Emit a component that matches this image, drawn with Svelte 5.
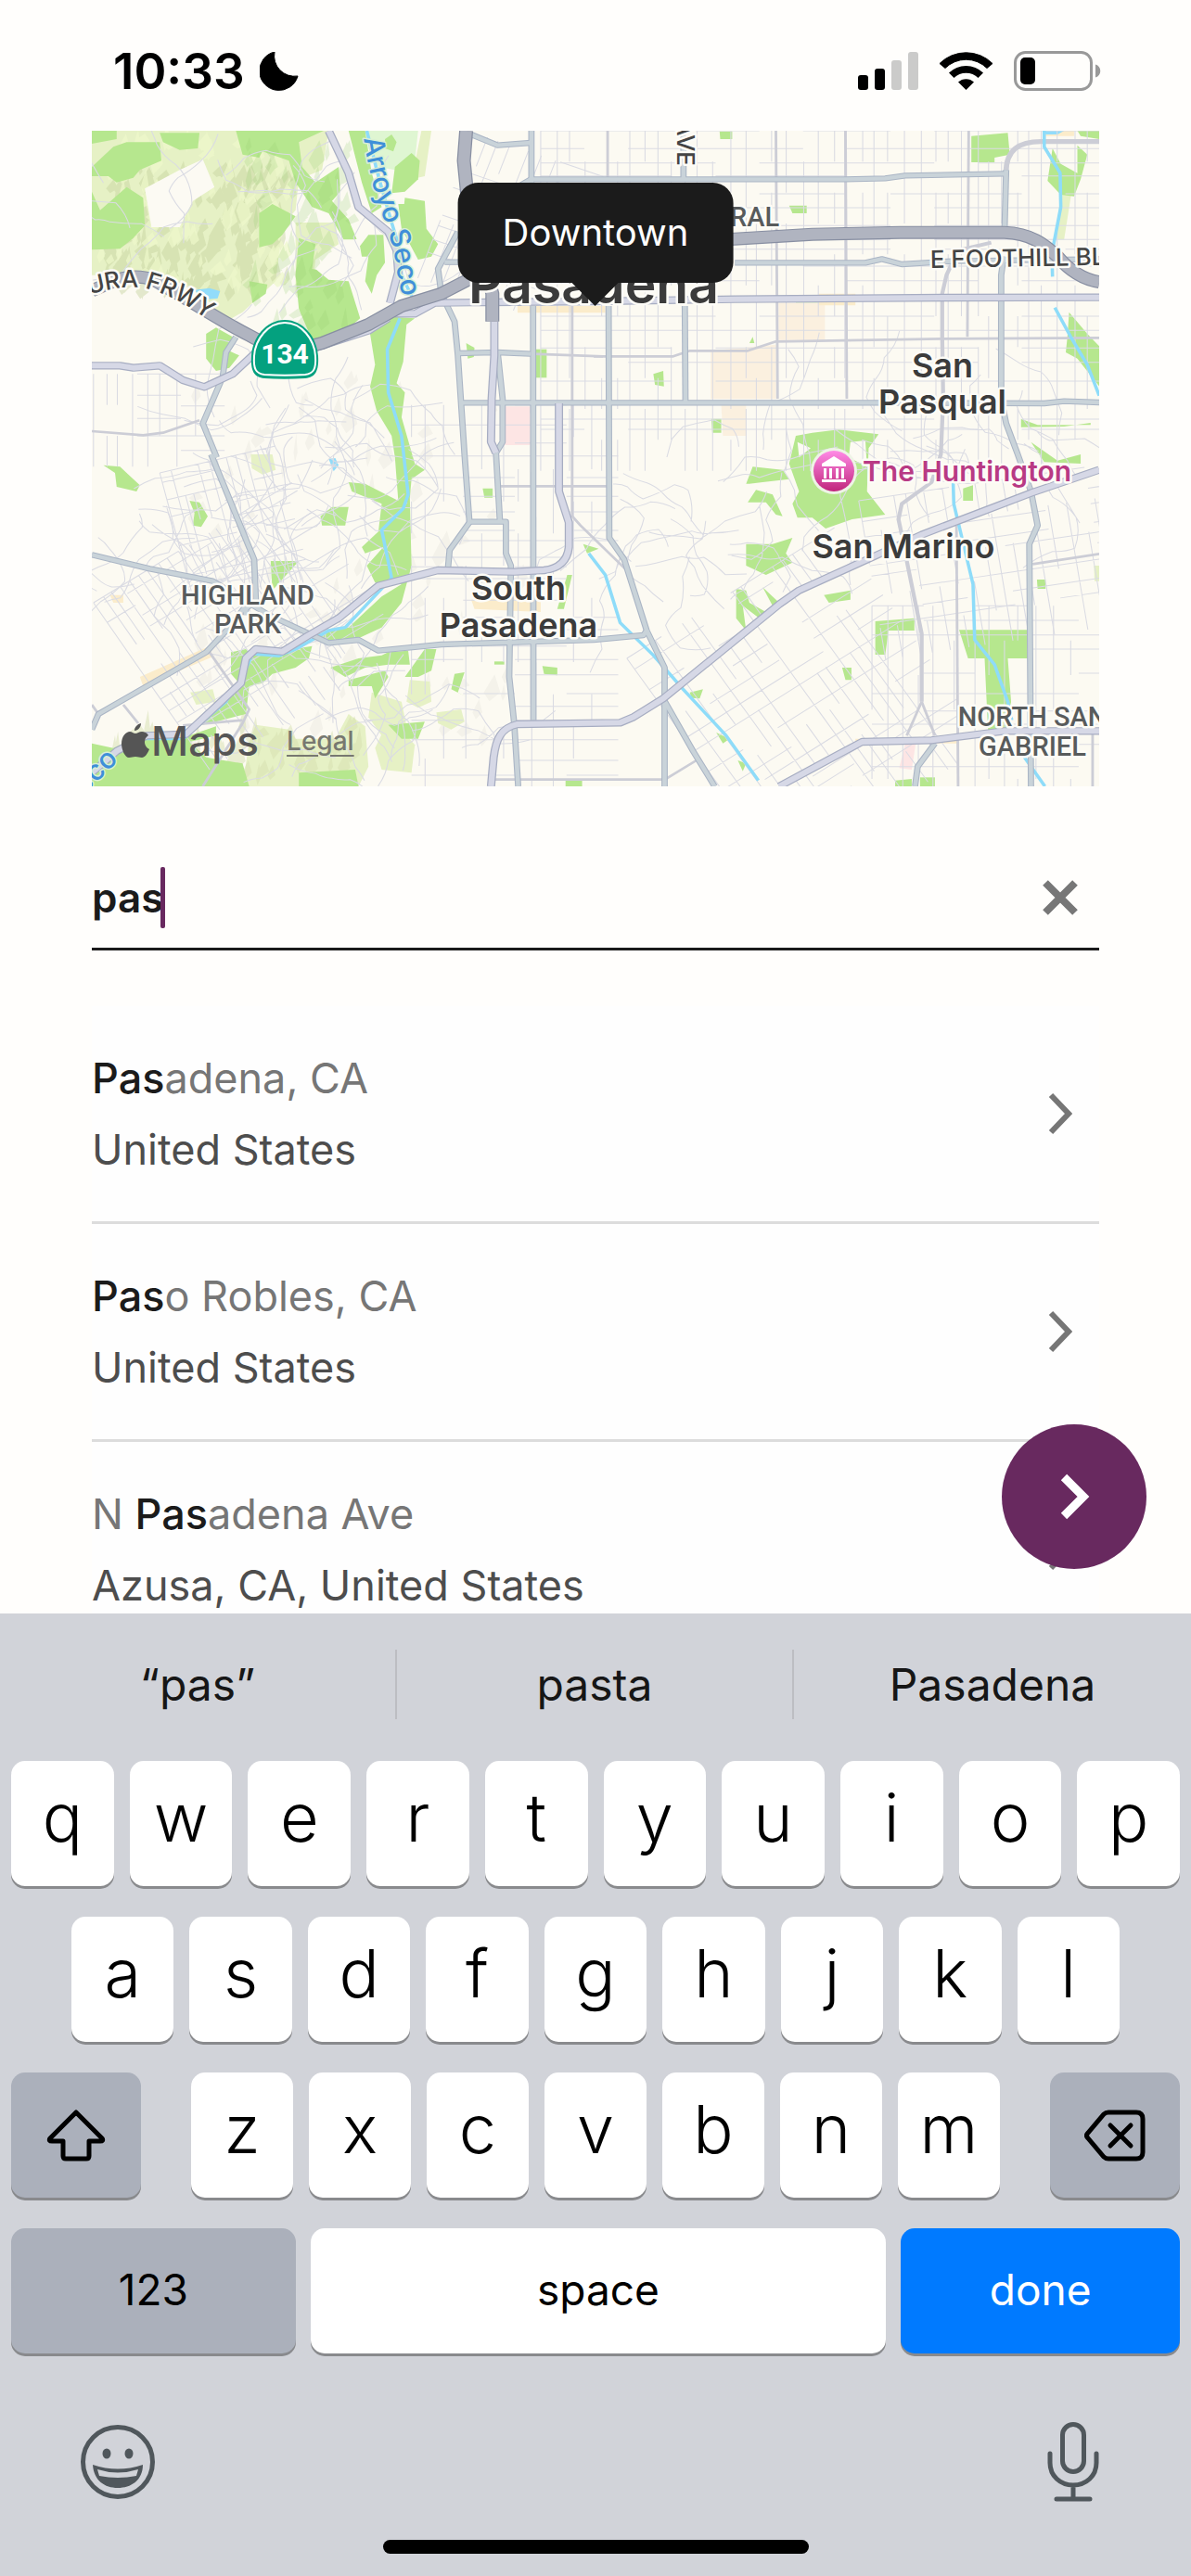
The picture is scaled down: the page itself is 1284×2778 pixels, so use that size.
<script>
  let query = $state('pas');

  const results = [
    { before: '', match: 'Pas', after: 'adena, CA', detail: 'United States' },
    { before: '', match: 'Pas', after: 'o Robles, CA', detail: 'United States' },
    { before: 'N ', match: 'Pas', after: 'adena Ave', detail: 'Azusa, CA, United States' }
  ];

  const suggestions = ['“pas”', 'pasta', 'Pasadena'];
  const topRow = [...'qwertyuiop'];
  const homeRow = [...'asdfghjkl'];
  const bottomRow = [...'zxcvbnm'];

  // Small seeded generator, so the street texture is the same on every load.
  function makeRandom(seed) {
    let s = seed;
    return () => {
      s = (s * 16807) % 2147483647;
      return s / 2147483647;
    };
  }

  function streetGrid(seed, w, h, dx, dy, keep) {
    const rnd = makeRandom(seed);
    let d = '';
    for (let x = 0; x < w; x += dx * (0.7 + rnd() * 0.6)) {
      for (let y = 0; y < h; y += dy * 2) {
        if (rnd() < keep) d += `M${Math.round(x)},${y}v${dy * 2}`;
      }
    }
    for (let y = 0; y < h; y += dy * (0.6 + rnd() * 0.8)) {
      for (let x = 0; x < w; x += dx * 3) {
        if (rnd() < keep) d += `M${x},${Math.round(y)}h${dx * 3}`;
      }
    }
    return d;
  }

  function lanes(seed, w, h, count) {
    const rnd = makeRandom(seed);
    let d = '';
    for (let i = 0; i < count; i++) {
      let x = rnd() * w;
      let y = rnd() * h;
      let a = rnd() * 6.28;
      d += `M${Math.round(x)},${Math.round(y)}`;
      for (let j = 0; j < 5; j++) {
        a += (rnd() - 0.5) * 1.8;
        const r = 22 + rnd() * 32;
        const cx = x + Math.cos(a) * r;
        const cy = y + Math.sin(a) * r;
        a += (rnd() - 0.5) * 1.2;
        x = cx + Math.cos(a) * r;
        y = cy + Math.sin(a) * r;
        d += `Q${Math.round(cx)},${Math.round(cy)} ${Math.round(x)},${Math.round(y)}`;
      }
    }
    return d;
  }

  function facets(seed, x0, y0, w, h, count) {
    const rnd = makeRandom(seed);
    let d = '';
    for (let i = 0; i < count; i++) {
      const x = Math.round(x0 + rnd() * w);
      const y = Math.round(y0 + rnd() * h);
      const a = Math.round(8 + rnd() * 26);
      const b = Math.round(20 + rnd() * 44);
      d += `M${x},${y}l${a},${-b}l${Math.round(a / 2)},${b}l${-a},${Math.round(b / 2)}z`;
    }
    return d;
  }

  const grids = [
    { d: streetGrid(11, 1680, 1010, 44, 50, 0.78), t: 'translate(1380 33)' },
    { d: streetGrid(5, 560, 1240, 52, 52, 0.5), t: 'translate(990 920)' },
    { d: streetGrid(23, 620, 560, 34, 46, 0.72), t: 'translate(30 1560) rotate(-33)' },
    { d: streetGrid(31, 340, 420, 30, 44, 0.66), t: 'translate(230 1140) rotate(-14)' },
    { d: streetGrid(3, 330, 280, 44, 50, 0.6), t: 'translate(30 820)' },
    { d: streetGrid(47, 640, 780, 42, 60, 0.66), t: 'translate(1640 1740) rotate(-34)' },
    { d: streetGrid(8, 640, 620, 52, 56, 0.62), t: 'translate(2380 1570)' },
    { d: streetGrid(17, 720, 420, 46, 52, 0.55), t: 'translate(2340 1230) rotate(-9)' },
    { d: streetGrid(29, 330, 420, 46, 50, 0.55), t: 'translate(1180 40) rotate(20)' }
  ];

  const curls = [
    { d: lanes(7, 700, 420, 34), t: 'translate(250 860)' },
    { d: lanes(19, 520, 420, 22), t: 'translate(440 1160)' },
    { d: lanes(37, 560, 420, 24), t: 'translate(620 1720)' },
    { d: lanes(41, 460, 420, 20), t: 'translate(1620 1060)' },
    { d: lanes(53, 300, 460, 13), t: 'translate(620 90)' },
    { d: lanes(61, 900, 180, 22), t: 'translate(2120 990)' },
    { d: lanes(71, 360, 360, 6), t: 'translate(60 80)' },
    { d: lanes(83, 360, 460, 12), t: 'translate(40 1100)' }
  ];

  const hillShade = facets(13, 60, 160, 540, 400, 170);
  const hillLight = facets(97, 40, 60, 560, 500, 90);
  const parkShade = facets(59, 480, 60, 320, 620, 60);
  const lowShade = facets(67, 60, 1960, 760, 180, 60);
  const paleShade = facets(73, 300, 820, 1000, 1200, 90);

  const paleGreen = [
    'M25,33H740L720,160L650,190L640,290L600,340L580,520L480,620L430,650L340,540L200,500L25,500Z',
    'M640,330L760,330L770,400L700,450L690,540L640,560Z',
    'M505,1080H570L580,1130L540,1145L508,1125Z',
    'M520,1955L620,1970L640,2000H760L800,1920L850,1960L860,2090L830,2154H480L500,2010Z',
    'M870,1850L960,1880L975,1960L940,2000L900,1990L860,1930Z',
    'M985,1810L1045,1815L1050,1880L1010,1900L975,1880Z',
    'M1065,1915L1140,1905L1150,1945L1110,1970L1070,1950Z',
    'M322,1850L390,1840L400,1880L340,1890Z',
    'M900,1985L960,1970L1000,2020L990,2110L900,2100L880,2030Z',
    'M2960,180H2990L2960,385H2930Z',
    'M3050,1440H3066V1490H3052Z',
    'M1020,33H1050L1030,180L990,190Z'
  ];

  const greens = [
    'M460,33H725L650,70L660,150L700,200L770,150L775,230L750,260L800,320L825,385H785L740,300L690,280L640,200L620,130L540,100L530,120L480,110Z',
    'M90,85L130,70L230,70L235,130L170,160L150,185L100,200L75,180L25,180V150Z',
    'M25,230L50,290L130,215L180,250L185,340L150,380L110,415L25,418Z',
    'M25,33H100V60L25,75Z',
    'M230,40H350L345,90L290,95L240,70Z',
    'M530,300L570,270L640,310L600,370L570,400L530,410Z',
    'M500,520L555,530L550,560L510,590Z',
    'M650,380L700,400L690,480L740,490L800,520L835,640L780,690L690,710L650,610L640,500Z',
    'M860,370L905,370L910,460L885,500L870,560L850,520L860,440L810,440Z',
    'M800,33H850L870,170L900,280L870,300L840,200Z',
    'M940,150L990,105L1015,130L1010,190L970,230L930,235Z',
    'M910,60L930,45L945,70L935,100L910,90Z',
    'M970,250L1030,260L1035,350L1070,400L1050,440L1010,450L960,350Z',
    'M950,270H990V340L960,350Z',
    'M370,690L400,670L450,700L430,740L470,760L440,800L400,810L370,770Z',
    'M930,635L1000,640L975,660L965,780L945,850L970,880L960,960L1000,1110L1030,1130L990,1160L985,1220L990,1440L960,1560L900,1640L820,1680L720,1680L690,1665L800,1640L840,1600L900,1540L960,1500L880,1495L855,1440L905,1380L850,1400L840,1380L890,1330L900,1240L810,1200L800,1170L850,1175L950,1230L940,1090L930,1020L885,940L865,860L880,790L865,690Z',
    'M445,1720L490,1710L510,1730L690,1700L680,1740L640,1770L570,1790L540,1820L500,1830L490,1920L400,1945L340,1960L430,1880L470,1820L445,1790Z',
    'M25,2015L90,2030L150,2000H290L400,1960L400,1990L320,2010L370,2060L480,2080L500,2154H25Z',
    'M745,1770L830,1740L900,1730L920,1720L980,1715L985,1760L920,1760L850,1770L790,1800Z',
    'M800,1810L910,1780L920,1800L880,1870L870,1830L800,1830Z',
    'M1030,1710H1065L1050,1780L1010,1800H970Z',
    'M1120,1790L1150,1785L1130,1850L1165,1870L1110,1840Z',
    'M715,1280L750,1250L800,1250L790,1310L720,1310Z',
    'M60,1115L110,1120L170,1180L160,1200L100,1185L95,1140Z',
    'M320,1230L350,1235L375,1280L355,1315L330,1310L335,1270Z',
    'M565,1425H650L570,1520Z',
    'M650,2110L820,2100L830,2154H650Z',
    'M920,1955L1030,1945L1010,2000H960Z',
    'M1365,740H1398V832H1365Z',
    'M1155,720L1180,735L1178,765L1160,770Z',
    'M1920,35H1958V60H1922Z',
    'M2680,50L2790,40L2796,110L2750,120V135H2680Z',
    'M2925,90L2950,140L3000,170V80L3030,110L3010,190L2990,245L2950,240L2910,195Z',
    'M3000,33H3066V60L3010,50Z',
    'M2130,275H2183V300H2140Z',
    'M2975,620L3030,690L3066,730V860L3000,770L2965,750L2970,700Z',
    'M1940,930H1978V962H1940Z',
    'M1895,965H1925V1010H1898Z',
    'M2155,685H2192V700H2155Z',
    'M2150,590H2225V597H2150Z',
    'M1925,795H1940V875H1925Z',
    'M1720,820L1750,810L1752,860L1725,855Z',
    'M2010,720L2020,700L2025,720Z',
    'M2150,1020L2200,1010L2280,1000L2400,1015L2370,1060L2365,1200L2420,1275L2320,1290L2240,1320L2200,1285H2155L2140,1240L2160,1200L2130,1110Z',
    'M2000,1175L2020,1120L2110,1130L2130,1160L2050,1170L2010,1175Z',
    'M2030,1195L2080,1210L2110,1280L2090,1275L2060,1235L2005,1235Z',
    'M2000,1370L2080,1370L2140,1350L2120,1400L2140,1430L2060,1470L2000,1440Z',
    'M1970,1515L2000,1520L2010,1560L2060,1590L2040,1610L1990,1570L2000,1650L1970,1610Z',
    'M2050,1510L2100,1560L2080,1570Z',
    'M2235,1535L2315,1520V1550L2250,1560Z',
    'M2390,1620L2508,1610V1650H2430L2420,1728H2390Z',
    'M2643,1648H2850V1740H2790L2800,1880L2780,1990L2730,1970L2720,1740H2670Z',
    'M2290,1770H2318V1810H2300Z',
    'M2830,965L2880,985H3040V978L2960,990L2830,992Z',
    'M2860,1040L2940,1100L3010,1080V1110L2900,1105Z',
    'M2655,1190L2685,1180V1230H2655Z',
    'M2878,1485H2904V1515H2880Z',
    'M2450,2135L2500,2130V2154H2450Z',
    'M2525,2125H2570V2154H2525Z',
    'M1830,1850L1870,1840L1860,1870L1835,1868Z',
    'M1910,1980L1950,2000L1930,2015Z',
    'M1975,2070L2000,2080L1990,2105Z',
    'M1385,1765L1430,1770V1795L1390,1790Z',
    'M1240,1750H1270V1760H1240Z',
    'M1205,1190H1235V1220H1210Z',
    'M1508,1370L1555,1385L1520,1400Z',
    'M1455,2135H1505V2154H1455Z',
    'M1460,1470H1475L1450,1580H1430Z'
  ];

  const tints = [
    { fill: '#fbf0df', d: 'M2098,590H2238V710H2098ZM1893,745L2090,725V900H1893ZM1925,920H2000V1020H1930Z' },
    { fill: '#fbeccb', d: 'M1310,600H1575V622H1310ZM2220,560H2330V598H2220ZM170,1800L380,1700L390,1735L180,1830ZM1170,1550L1380,1540V1590L1180,1580ZM2330,2000H2640V2015H2330ZM80,1535H120V1560H90ZM2900,33H2990V50H2900Z' },
    { fill: '#fde5e4', d: 'M1272,925H1348V1050H1272ZM2480,2018L2512,2015L2500,2100L2462,2095Z' },
    { fill: '#fcfaf3', d: 'M185,220L290,160L360,125L395,215L330,260L290,345L205,345Z' },
    { fill: '#fcfaf3', d: 'M700,480L740,430L830,380L840,440L800,520L740,515Z' },
    { fill: '#fcfaf3', d: 'M2155,1040L2195,1060L2160,1090ZM2315,1040L2360,1035L2365,1120L2310,1090Z' },
    { fill: '#92dcfa', d: 'M335,548L380,542L412,552L405,575L360,580ZM740,1095L760,1092L770,1115L755,1135ZM2900,33H2960L2940,45H2905Z' }
  ];

  const connectors = [
    'M1582,33V190', 'M2090,33L2094,700L2095,900', 'M2300,33L2304,900', 'M2672,33L2668,700',
    'M1540,763H1780L1830,745H2005L2090,715L2590,706L3066,703',
    'M1475,600V1280L1500,1310L1635,1450',
    'M25,1005L180,1018L240,1010L350,970',
    'M380,1720L500,1905L480,1950L360,2154', 'M120,1890L165,1950', 'M300,1957L480,1940',
    'M1260,1183H1585', 'M1240,2132H1755L1850,2070',
    'M2635,1310L2640,2154', 'M2865,1435L3066,1402', 'M1357,755L1568,763', 'M3046,1980V2154',
    'M2530,1880L2485,1990', 'M2530,1880L2570,1990', 'M25,1890L45,1920'
  ];

  const avenues = [
    'M2485,1425L2530,1660V1880',
    'M2740,395L2640,420L2605,500L2592,560L2592,700L2595,900L2588,1080L2560,1170L2470,1240L2460,1290L2470,1340'
  ];

  const arterials = [
    'M1170,45L1250,80L1350,72', 'M1352,33V200',
    'M1310,215L1350,190H2300L2420,187L2480,178L2780,172',
    'M1130,360L1070,480L1080,560L1120,650L1130,760L1150,1080L1165,1300L1105,1390L1100,1450',
    'M1090,458H1150', 'M1130,753L1250,750L1350,755',
    'M1140,913H2380L2900,915L2960,908L3066,912',
    'M1357,600L1358,1940',
    'M1250,750L1265,900V1040L1245,1075L1257,1298',
    'M1165,1298H1275V1400L1290,1440L1285,1800L1300,1950L1312,2154',
    'M1585,600L1587,1350L1632,1420L1700,1650L1754,1770V2154',
    'M1811,50V190', 'M1815,600L1817,910',
    'M1966,460H2360L2410,448L2470,465L2620,455L3066,448',
    'M2785,160L2780,360', 'M2778,440L2770,500V900L2785,980L2820,1080L2860,1200L2880,1310L2855,1370L2860,2154',
    'M385,1080L515,1420L520,1550L490,1580V1600',
    'M25,1405L200,1450L390,1490L560,1600L670,1655L740,1690L830,1680L890,1715L1080,1695L1540,1680L1690,1665L1700,1650',
    'M25,1970L45,1920L370,1720L440,1640L490,1570',
    'M460,700L430,750L420,830L360,980L402,1090',
    'M1755,1880L1840,2040L1905,2154', 'M2510,2154L2518,2090L2570,2015'
  ];

  const highways = [
    'M740,33L800,170L830,280L920,360L945,420L950,490L925,590',
    'M940,625H1000L1060,590L1220,588L1540,585L1966,578L2600,573L3066,572',
    'M25,793H110L150,800L230,793L300,840L365,862L450,820L520,750L700,735L860,680L920,640',
    'M1240,650V760L1232,900L1230,1040L1245,1075',
    'M1435,915V1200L1465,1300V1380C1460,1430 1430,1450 1390,1455L1300,1460L1070,1455L890,1505L770,1610L680,1665L600,1718L520,1710L490,1740L475,1820L310,1985L190,1990L100,2040L25,2110',
    'M3066,1130L2860,1205L2530,1340L2160,1520L2100,1565L1750,1870L1660,1930L1620,1948L1310,1953C1260,1965 1245,2000 1238,2060L1230,2154',
    'M2100,2154L2280,2050L2350,2010L2560,2005L2780,1975H3066'
  ];

  const freeways = [
    'M25,550L80,525C130,500 170,500 210,515C290,560 400,640 500,695C570,740 640,745 720,720L860,660L960,600L1080,560L1170,510L1400,420L1966,383L2200,368L2465,362H2780C2860,365 2900,400 2940,440C2980,490 3020,515 3066,522',
    'M1155,33L1148,130L1160,260L1234,560V650'
  ];

  const rivers = [
    'M855,33L890,180L930,330L950,400L960,500L1000,590',
    'M955,640L917,740L920,880L960,1020L980,1210L965,1255L900,1325L930,1480L895,1520L790,1640L740,1650L640,1710L590,1732L510,1725L480,1800L430,1880L300,2000H190',
    'M2900,33V85L2948,170L2950,280L2923,430L2925,505',
    'M2932,605L2980,700L3030,790L3066,890',
    'M2625,1170L2627,1240L2685,1500L2690,1680L2750,1760L2790,1880L2802,1940',
    'M2840,2060L2902,2154',
    'M1525,1400L1575,1470L1620,1625L1720,1730L1810,1840L1940,1990L2037,2135'
  ];
</script>

{#snippet chevron()}
  <svg class="chevron" viewBox="0 0 26 46" aria-hidden="true">
    <path d="M3 3 22 23 3 43" fill="none" stroke="currentColor" stroke-width="6" />
  </svg>
{/snippet}

<div class="screen">
  <header class="status">
    <div class="clock">
      <time>10:33</time>
      <svg width="42" height="42" viewBox="0 0 42 42" aria-label="Do not disturb" role="img">
        <path d="M16 0A22 22 0 0 0 41 26A21 21 0 1 1 16 0Z" stroke="#000" stroke-linejoin="round" />
      </svg>
    </div>
    <svg class="radios" width="264" height="43" viewBox="0 0 264 43" role="img" aria-label="Signal, Wi-Fi and battery">
      <rect x="0" y="26" width="11" height="16" rx="3" />
      <rect x="18" y="19" width="11" height="23" rx="3" />
      <rect x="36" y="10" width="11" height="32" rx="3" fill="#cbcbca" />
      <rect x="54" y="1" width="11" height="41" rx="3" fill="#cbcbca" />
      <g transform="translate(116.5 42)">
        <path d="M-28.500-28.500A40.500 40.500 0 0 1 28.500-28.500L22.500-23.500A32 32 0 0 0-22.500-23.500Z" stroke="#000" stroke-linejoin="round" />
        <path d="M-18.500-18.500A26.500 26.500 0 0 1 18.500-18.500L13-13A18.500 18.500 0 0 0-13-13Z" />
        <path d="M-8.500-8.500A12.500 12.500 0 0 1 8.500-8.500L0 0Z" />
      </g>
      <rect x="169.500" y="1.500" width="82" height="40" rx="11" fill="none" stroke="#999" stroke-width="3" />
      <rect x="175" y="7" width="16" height="29" rx="5" />
      <path d="M256 14.500c7 2 7 12 0 14z" fill="#999" />
    </svg>
  </header>

  <main>
    <section class="map" aria-label="Map of Pasadena">
      <svg class="tiles" viewBox="0 0 1086 707" role="img" aria-label="Streets around Pasadena">
        <defs>
          <linearGradient id="pin" x1="0" y1="0" x2="0" y2="1">
            <stop offset="0" stop-color="#ff8ae6" />
            <stop offset="1" stop-color="#c0267c" />
          </linearGradient>
          <path id="frwy" d="M-68,206Q-20,178 12,173Q40,166 62,171Q86,178 106,191T160,226" />
          <path id="arroyo" d="M293,8Q300,55 313,90T329,150T343,200" />
          <path id="seco" d="M-22,730L48,660" />
        </defs>
        <rect width="1086" height="707" fill="#fcfaf2" />
        <g transform="scale(.35714 .33333) translate(-25 -33)" fill="none" stroke-linejoin="round">
          <path d={paleShade} fill="#f4f2ea" />
          {#each paleGreen as d}<path {d} fill="#e6f1c5" />{/each}
          <path d={hillShade} fill="#c6d29d" opacity=".45" />
          <path d={hillLight} fill="#eef8ca" opacity=".7" />
          <path d={lowShade} fill="#d5e0b0" opacity=".5" />
          <path d="M850,33H1010L1000,130L940,160L890,150L860,90Z" fill="#dff6d2" />
          {#each greens as d}<path {d} fill="#b6e78e" />{/each}
          <path d={parkShade} fill="#98cf74" opacity=".22" />
          {#each tints as t}<path d={t.d} fill={t.fill} />{/each}
          <g stroke="#dadbe3" stroke-width="3">
            {#each grids as g}<path d={g.d} transform={g.t} />{/each}
            {#each curls as g}<path d={g.d} transform={g.t} />{/each}
          </g>
          <g stroke="#cccdd6" stroke-width="8">{#each connectors as d}<path {d} />{/each}</g>
          <path d="M2785,180C2780,90 2830,68 2890,68H3066" stroke="#cccdd6" stroke-width="16" />
          <g stroke="#cccdd6" stroke-width="12">{#each avenues as d}<path {d} />{/each}</g>
          <g stroke="#8edcf9" stroke-width="10">{#each rivers as d}<path {d} />{/each}</g>
          <g stroke="#aab5c5" stroke-width="19">{#each arterials as d}<path {d} />{/each}</g>
          <g stroke="#c9d3d9" stroke-width="13">{#each arterials as d}<path {d} />{/each}</g>
          <g stroke="#a7adc2" stroke-width="25">{#each highways as d}<path {d} />{/each}</g>
          <g stroke="#d6d8e6" stroke-width="18">{#each highways as d}<path {d} />{/each}</g>
          <g stroke="#888fa2" stroke-width="42">{#each freeways as d}<path {d} />{/each}</g>
          <g stroke="#b0b4c0" stroke-width="35">{#each freeways as d}<path {d} />{/each}</g>
        </g>

        <path d="M208 204c20 0 35 19 36 39 1 16-3 23-14 24-15 1-30 1-44 0-11-1-15-8-14-24 1-20 16-39 36-39z" fill="#04a17f" />
        <path d="M208 207c18 0 32 18 33 36 1 14-2 19-11 20-15 1-29 1-44 0-9-1-12-6-11-20 1-18 15-36 33-36z" fill="none" stroke="#fff" stroke-width="2" />
        <text class="shield" x="208" y="251">134</text>

        <g class="town">
          <text class="city" x="541" y="186">Pasadena</text>
          <text x="917" y="266">San</text>
          <text x="917" y="305">Pasqual</text>
          <text x="875" y="461">San Marino</text>
          <text x="460" y="506">South</text>
          <text x="460" y="546">Pasadena</text>
        </g>
        <g class="district">
          <text x="168" y="511">HIGHLAND</text>
          <text x="168" y="542">PARK</text>
          <text x="1014" y="642">NORTH SAN</text>
          <text x="1014" y="674">GABRIEL</text>
          <text x="678" y="103">CENTRAL</text>
        </g>
        <g class="road">
          <text><textPath href="#frwy">VENTURA FRWY</textPath></text>
          <text transform="translate(904 148) rotate(-1)">E FOOTHILL BLVD</text>
          <text transform="translate(631 38) rotate(90)" text-anchor="end">LAKE AVE</text>
        </g>
        <g class="water">
          <text><textPath href="#arroyo">Arroyo Seco</textPath></text>
          <text><textPath href="#seco">Seco</textPath></text>
        </g>

        <circle cx="800" cy="367" r="25" fill="#eef3e6" />
        <circle cx="800" cy="367" r="22" fill="url(#pin)" />
        <path d="M800 351l13 8v3h-26v-3zm-11 13h3v11h-3zm6 0h3v11h-3zm7 0h3v11h-3zm6 0h3v11h-3zm-21 12h26v3h-26z" fill="#fff" />
        <text class="poi" x="831" y="378">The Huntington</text>
      </svg>
      <div class="callout">Downtown</div>
      <div class="credits">
        <svg width="30" height="38" viewBox="0 0 30 38" aria-hidden="true">
          <path d="M21 0c0 4-3 8-7 8 0-4 3-7 7-8zM15 11c2 0 4-2 7-2s5 1 7 4c-6 4-5 12 1 15-2 5-5 9-8 9s-4-1-7-1-4 1-7 1C4 37 0 29 0 22 0 14 5 9 9 9c2 0 4 2 6 2z" fill="currentColor" />
        </svg>
        <span class="brand">Maps</span>
        <a href="#legal">Legal</a>
      </div>
    </section>

    <form class="search" onsubmit={(e) => e.preventDefault()}>
      <input type="text" aria-label="Neighborhood or city" bind:value={query} />
      <span class="caret"></span>
      <button type="button" aria-label="Clear" onclick={() => (query = '')}>
        <svg width="40" height="40" viewBox="0 0 40 40" aria-hidden="true">
          <path d="M4 4 36 36M36 4 4 36" stroke="#777" stroke-width="8" />
        </svg>
      </button>
    </form>

    <ul class="results">
      {#each results as r}
        <li>
          <button type="button">
            <span class="lines">
              <span class="name">{r.before}<b>{r.match}</b>{r.after}</span>
              <span class="detail">{r.detail}</span>
            </span>
            {@render chevron()}
          </button>
        </li>
      {/each}
    </ul>

    <button type="button" class="next" aria-label="Continue">
      <svg width="34" height="52" viewBox="0 0 34 52" aria-hidden="true">
        <path d="M6 5 27 26 6 47" fill="none" stroke="#fff" stroke-width="9" />
      </svg>
    </button>
  </main>

  <section class="keyboard" aria-label="Keyboard">
    <div class="suggestions">
      {#each suggestions as s}<button type="button">{s}</button>{/each}
    </div>
    <div class="keys">
      <div class="row">
        {#each topRow as k}<button type="button" class="key">{k}</button>{/each}
      </div>
      <div class="row inset">
        {#each homeRow as k}<button type="button" class="key">{k}</button>{/each}
      </div>
      <div class="row third">
        <button type="button" class="key dark" aria-label="Shift">
          <svg width="64" height="56" viewBox="0 0 64 56" aria-hidden="true">
            <path d="M32 3 60 31q2 3-2 3H46V50q0 3-3 3H21q-3 0-3-3V34H6q-4 0-2-3Z" fill="none" stroke="#000" stroke-width="5" stroke-linejoin="round" />
          </svg>
        </button>
        <div class="row letters">
          {#each bottomRow as k}<button type="button" class="key">{k}</button>{/each}
        </div>
        <button type="button" class="key dark" aria-label="Delete">
          <svg width="66" height="56" viewBox="0 0 66 56" aria-hidden="true">
            <path d="M26 3H56q7 0 7 7V46q0 7-7 7H26q-3 0-5-2L4 31q-3-3 0-6L21 5q2-2 5-2Z" fill="none" stroke="#000" stroke-width="5" />
            <path d="M28 17 50 39M50 17 28 39" stroke="#000" stroke-width="5" stroke-linecap="round" />
          </svg>
        </button>
      </div>
      <div class="row fourth">
        <button type="button" class="key word dark">123</button>
        <button type="button" class="key word">space</button>
        <button type="button" class="key word done">done</button>
      </div>
    </div>
    <div class="tools">
      <button type="button" aria-label="Emoji">
        <svg width="82" height="82" viewBox="0 0 82 82" aria-hidden="true">
          <circle cx="41" cy="41" r="37.500" fill="none" stroke="#50575c" stroke-width="5" />
          <ellipse cx="29" cy="32" rx="4.500" ry="5.500" fill="#50575c" />
          <ellipse cx="53" cy="32" rx="4.500" ry="5.500" fill="#50575c" />
          <path d="M14 44q27 9 54 0c0 17-13 25-27 25S15 61 14 44z" fill="#50575c" />
          <path d="M19 49q22 7 44 0l-2 7q-20 4-40 0z" fill="#d1d3d8" />
        </svg>
      </button>
      <button type="button" aria-label="Dictate">
        <svg width="56" height="86" viewBox="0 0 56 86" aria-hidden="true" fill="none" stroke="#50575c" stroke-width="5" stroke-linecap="round">
          <rect x="16.500" y="2.500" width="23" height="51" rx="11.500" />
          <path d="M3 34v10c0 14 11 24 25 24s25-10 25-24V34M28 68v14M10 83H46" />
        </svg>
      </button>
    </div>
    <div class="home"></div>
  </section>
</div>

<style>
  :global(body) {
    background: #fffefc;
  }

  .screen {
    display: flex;
    flex-direction: column;
    height: 100vh;
    overflow: hidden;
    font-family: Inter, 'Liberation Sans', sans-serif;
    color: #1b1b1b;
    background: #fffefc;
  }

  button {
    margin: 0;
    padding: 0;
    border: 0;
    background: none;
    font: inherit;
    color: inherit;
  }

  svg {
    display: block;
    flex: none;
  }

  .status {
    display: flex;
    flex: none;
    align-items: center;
    justify-content: space-between;
    height: 129px;
    padding: 12px 95px 0 122px;
    color: #000;
  }

  .clock {
    display: flex;
    align-items: center;
    gap: 16px;
    font-size: 53px;
    font-weight: 600;
  }

  main {
    position: relative;
    flex: 1;
    min-height: 0;
    overflow: hidden;
    padding: 0 99px;
  }

  .map {
    position: relative;
    overflow: hidden;
  }

  .tiles {
    width: 100%;
    height: auto;
    overflow: hidden;
  }

  .tiles text {
    paint-order: stroke;
    stroke: #fdfcf7;
    stroke-width: 5px;
    stroke-linejoin: round;
  }

  .town text {
    font-size: 36px;
    font-weight: 600;
    fill: #3b3b3b;
    text-anchor: middle;
  }

  .town .city {
    font-size: 57px;
  }

  .district text {
    font-family: Roboto, sans-serif;
    font-size: 29px;
    font-weight: 500;
    fill: #585b5c;
    text-anchor: middle;
  }

  .road text {
    font-size: 26px;
    font-weight: 500;
    fill: #444;
  }

  .water text {
    font-size: 30px;
    font-weight: 500;
    fill: #3f8fd9;
    stroke: #d9efd5;
    stroke-width: 3px;
  }

  .tiles .poi {
    font-size: 30px;
    font-weight: 600;
    fill: #b83a84;
  }

  .tiles .shield {
    font-family: Roboto, sans-serif;
    font-size: 30px;
    font-weight: 700;
    fill: #fff;
    stroke: none;
    text-anchor: middle;
  }

  .callout {
    position: absolute;
    top: 56px;
    left: 50%;
    transform: translateX(-50%);
    padding: 0 48px;
    border-radius: 22px;
    background: #1b1b1b;
    color: #fff;
    font-size: 40px;
    line-height: 108px;
  }

  .callout::after {
    content: '';
    position: absolute;
    top: 100%;
    left: 50%;
    transform: translateX(-50%);
    border: 25px solid transparent;
    border-top-color: #1b1b1b;
    border-bottom: 0;
  }

  .credits {
    position: absolute;
    left: 32px;
    bottom: 22px;
    display: flex;
    align-items: center;
    gap: 2px;
    color: #555;
    line-height: 54px;
  }

  .brand {
    font-size: 44px;
    font-weight: 500;
  }

  .credits a {
    margin-left: 28px;
    font-size: 28px;
    font-weight: 500;
    color: #777870;
    text-underline-offset: 5px;
  }

  .search {
    position: relative;
    display: flex;
    align-items: center;
    height: 108px;
    margin-top: 66px;
    padding-right: 22px;
    border-bottom: 3px solid #1b1b1b;
  }

  .search input {
    flex: 1;
    min-width: 0;
    padding: 0;
    border: 0;
    outline: 0;
    background: none;
    font: 600 44px Inter, 'Liberation Sans', sans-serif;
    color: #1b1b1b;
  }

  .caret {
    position: absolute;
    left: 74px;
    width: 5px;
    height: 66px;
    border-radius: 2px;
    background: #68295f;
  }

  .results {
    margin: 60px 0 0;
    padding: 0;
    list-style: none;
    background: #fefefe;
  }

  .results li {
    border-bottom: 3px solid #dcdcdc;
  }

  .results button {
    display: flex;
    align-items: center;
    justify-content: space-between;
    width: 100%;
    padding: 39px 29px 39px 0;
    text-align: left;
    font-size: 45px;
    line-height: 77px;
  }

  .lines {
    display: flex;
    flex-direction: column;
  }

  .name {
    color: #767676;
    white-space: pre;
  }

  .name b {
    font-weight: 500;
    color: #1b1b1b;
  }

  .detail {
    color: #4d4d4d;
  }

  .chevron {
    width: 26px;
    height: 46px;
    color: #767676;
  }

  .next {
    position: absolute;
    right: 48px;
    bottom: 48px;
    display: grid;
    place-items: center;
    width: 156px;
    height: 156px;
    border-radius: 50%;
    background: #68295f;
  }

  .keyboard {
    flex: none;
    padding: 39px 0 24px;
    background: #d1d3d9;
  }

  .suggestions {
    display: grid;
    grid-template-columns: repeat(3, 1fr);
    margin-bottom: 45px;
  }

  .suggestions button {
    height: 75px;
    font-size: 48px;
    color: #161616;
  }

  .suggestions button:not(:last-child) {
    border-right: 2px solid #bcbdc2;
  }

  .keys {
    display: flex;
    flex-direction: column;
    gap: 33px;
    padding: 0 12px;
  }

  .row {
    display: flex;
    gap: 17px;
  }

  .inset {
    padding: 0 65px;
  }

  .third {
    gap: 54px;
  }

  .third > .key {
    flex: 0 0 140px;
    padding: 0;
  }

  .letters {
    flex: 1;
  }

  .key {
    display: flex;
    flex: 1;
    align-items: center;
    justify-content: center;
    min-width: 0;
    height: 135px;
    padding-bottom: 14px;
    border-radius: 15px;
    background: #fff;
    box-shadow: 0 3px 0 #898a8d;
    color: #000;
    font-size: 72px;
    font-weight: 300;
  }

  .key.dark {
    background: #abb0bb;
  }

  .key.word {
    flex: 0 0 auto;
    padding: 0 0 4px;
    font-size: 46px;
    font-weight: 400;
  }

  .fourth {
    display: grid;
    grid-template-columns: 307fr 621fr 301fr;
    gap: 16px;
  }

  .key.done {
    background: #007aff;
    color: #fff;
  }

  .tools {
    display: flex;
    align-items: center;
    justify-content: space-between;
    height: 90px;
    padding: 72px 99px 0 86px;
  }

  .home {
    width: 459px;
    height: 15px;
    margin: 39px auto 0;
    border-radius: 8px;
    background: #000;
  }
</style>
